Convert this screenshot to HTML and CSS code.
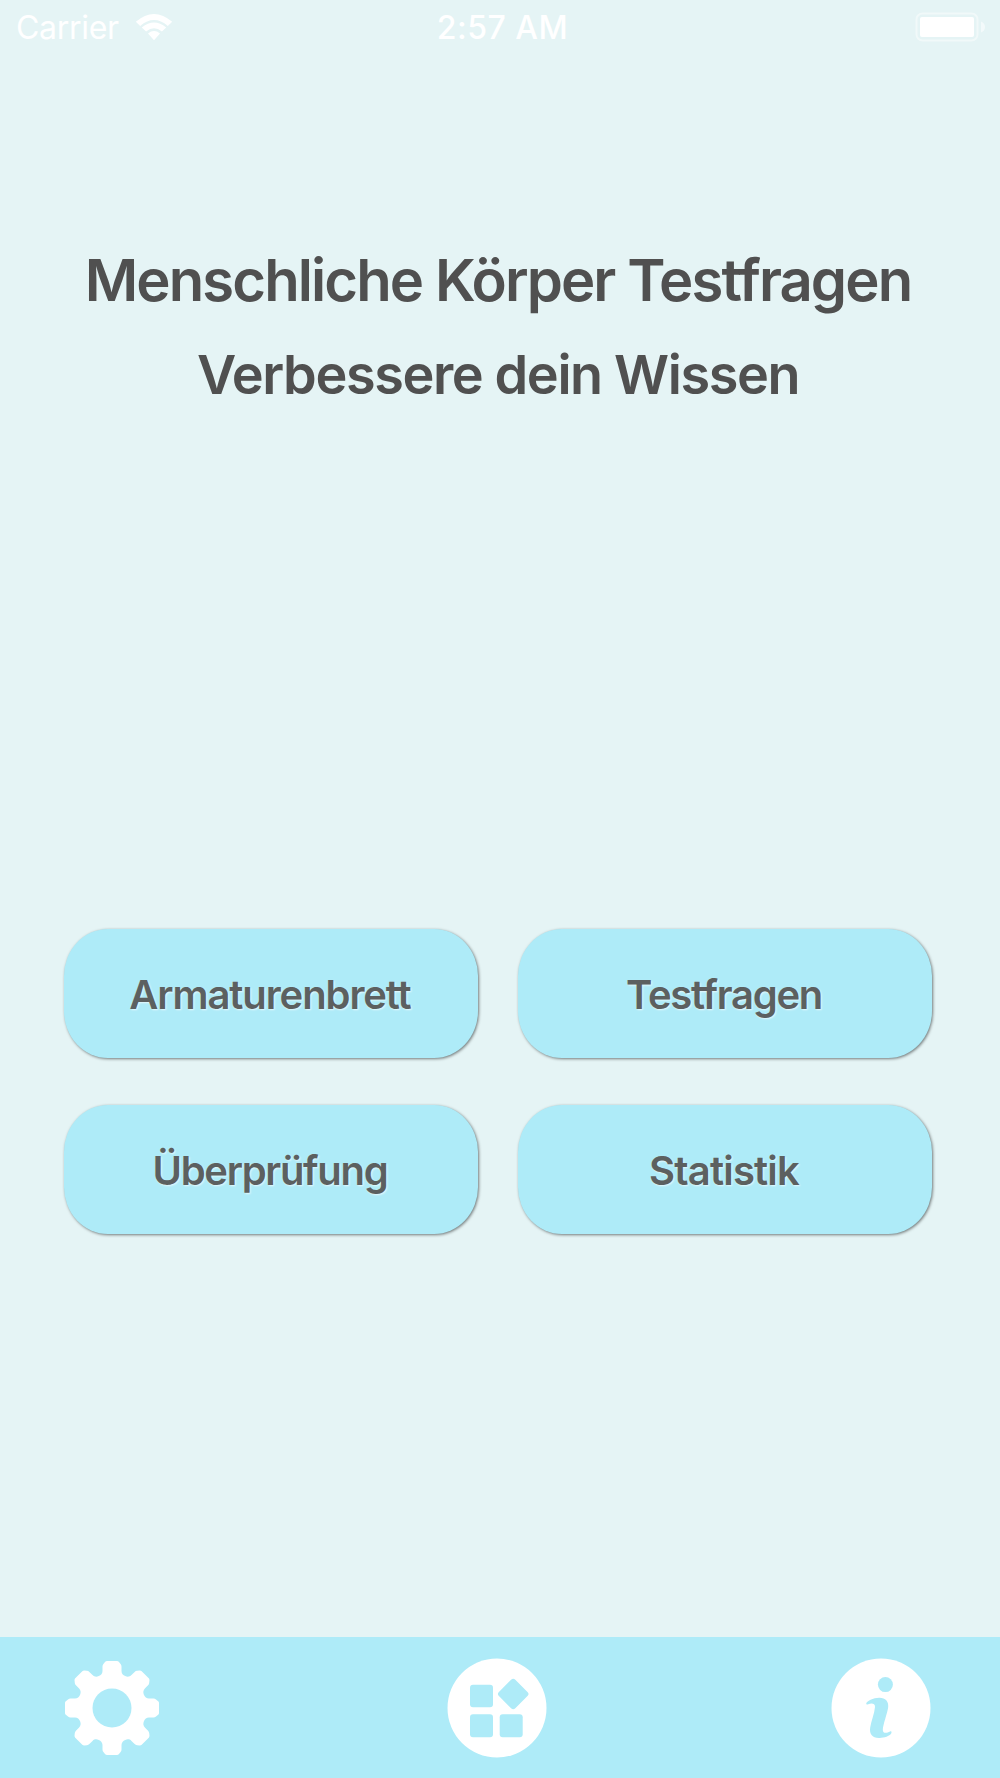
FILE: index.html
```html
<!DOCTYPE html>
<html lang="de">
<head>
  <meta charset="UTF-8">
  <meta name="viewport" content="width=device-width, initial-scale=1.0">
  <title>Menschliche Körper Testfragen</title>
  <link rel="stylesheet" href="styles.css">
</head>
<body>
  <!-- Status Bar -->
  <header class="status-bar">
    <div class="network">
      <span class="carrier">Carrier</span>
      <svg class="wifi" viewBox="0 0 38 27">
        <path d="M0.8 7.8 Q19 -7.8 37.2 7.8 L32.8 12 Q19 0.2 5.2 12 Z"/>
        <path d="M6.8 13.4 Q19 3.4 31.2 13.4 L26.9 17.5 Q19 11 11.1 17.5 Z"/>
        <path d="M13 19.4 Q19 14.8 25 19.4 L19 26.2 Z"/>
      </svg>
    </div>
    <span class="clock">2:57 AM</span>
    <svg class="battery" viewBox="0 0 70 30">
      <rect x="1.5" y="1.5" width="61" height="27" rx="6" class="battery-frame"/>
      <rect x="5" y="5" width="54" height="20" rx="2"/>
      <path d="M66 9.5 Q70 11 70 15 Q70 19 66 20.5 Z" class="battery-tip"/>
    </svg>
  </header>

  <main class="home">
    <h1 class="title">Menschliche Körper Testfragen</h1>
    <h2 class="subtitle">Verbessere dein Wissen</h2>

    <div class="menu">
      <button class="menu-button"><span class="label-dashboard">Armaturenbrett</span></button>
      <button class="menu-button"><span class="label-quiz">Testfragen</span></button>
      <button class="menu-button"><span class="label-review">Überprüfung</span></button>
      <button class="menu-button"><span class="label-stats">Statistik</span></button>
    </div>
  </main>

  <!-- Bottom Bar -->
  <nav class="tab-bar">
    <a class="tab" aria-label="Einstellungen">
      <svg viewBox="-50 -50 100 100">
        <defs>
          <path id="tooth" d="M0 0 L-13.2 -31.9 C-11 -32.8 -9.5 -34.5 -9.5 -37 V-41.5 Q-9.5 -43 -8.6 -44 L-6.8 -46.2 Q-6 -47 -5 -47 H5 Q6 -47 6.8 -46.2 L8.6 -44 Q9.5 -43 9.5 -41.5 V-37 C9.5 -34.5 11 -32.8 13.2 -31.9 Z"/>
        </defs>
        <circle r="34.2"/>
        <use href="#tooth"/>
        <use href="#tooth" transform="rotate(45)"/>
        <use href="#tooth" transform="rotate(90)"/>
        <use href="#tooth" transform="rotate(135)"/>
        <use href="#tooth" transform="rotate(180)"/>
        <use href="#tooth" transform="rotate(225)"/>
        <use href="#tooth" transform="rotate(270)"/>
        <use href="#tooth" transform="rotate(315)"/>
        <circle r="19.5" class="cutout"/>
      </svg>
    </a>
    <a class="tab" aria-label="Kategorien">
      <svg viewBox="-50 -50 100 100">
        <circle r="49.5"/>
        <g class="cutout">
          <rect x="-27" y="-23.3" width="23" height="22.6" rx="3"/>
          <rect x="-27" y="6.2" width="23" height="23" rx="3"/>
          <rect x="2.7" y="6.2" width="23" height="23" rx="3"/>
          <rect x="-11.6" y="-11.6" width="23.2" height="23.2" rx="3" transform="translate(16.2 -14) rotate(45)"/>
        </g>
      </svg>
    </a>
    <a class="tab" aria-label="Info">
      <svg viewBox="-50 -50 100 100">
        <circle r="49.5"/>
        <g class="cutout">
          <circle cx="4.4" cy="-23.4" r="7.5"/>
          <path d="M-14.8 -4.2 C-14.8 -6.8 -7 -10.5 -1.5 -10.3 C4.5 -10.2 7.8 -6.5 7.2 -1 C6.5 5 1.8 17 1.8 22 C2 26 6 25 9 23.5 C10.5 22.8 11 23.8 10.2 25.6 C8.5 28.5 2.5 30.2 -2 30 C-9 29.7 -11.8 26 -10.8 19.5 C-9.8 13 -6.5 5.5 -6 -1 C-5.8 -5 -10 -4.8 -12.8 -3.7 C-14 -3.2 -14.8 -3.3 -14.8 -4.2 Z"/>
        </g>
      </svg>
    </a>
  </nav>
</body>
</html>
```

FILE: styles.css
```css
/* General Styling */
* {
  box-sizing: border-box;
}

body {
  margin: 0;
  height: 100vh;
  display: flex;
  flex-direction: column;
  font-family: Inter, 'Liberation Sans', sans-serif;
  font-variant-ligatures: none;
  color: #505050;
  background: #e5f4f5;
  overflow: hidden;
}

svg {
  display: block;
  fill: #fff;
}

/* Status Bar */
.status-bar {
  height: 54px;
  padding: 0 15px 0 16px;
  display: grid;
  grid-template-columns: 1fr auto 1fr;
  align-items: center;
  color: #fff;
  font-size: 32px;
}

.network {
  display: flex;
  align-items: center;
  gap: 16px;
}

.carrier {
  letter-spacing: -0.3px;
}

.clock {
  padding-left: 4px;
  font-weight: 500;
  letter-spacing: 0.5px;
}

.wifi {
  width: 38px;
  height: 27px;
}

.battery {
  width: 70px;
  height: 30px;
  justify-self: end;
}

.battery-frame {
  fill: none;
  stroke: #fff;
  stroke-width: 2;
  opacity: 0.45;
}

.battery-tip {
  opacity: 0.55;
}

/* Home Screen */
.home {
  flex: 1;
  padding-right: 4px;
  text-align: center;
}

.title,
.subtitle {
  margin: 0;
  font-weight: 600;
  white-space: nowrap;
}

.title {
  padding-top: 191px;
  font-size: 58px;
  line-height: 70px;
  letter-spacing: -1.9px;
}

.subtitle {
  padding-top: 25px;
  font-size: 54px;
  line-height: 70px;
  letter-spacing: -1.4px;
}

.menu {
  display: grid;
  grid-template-columns: 414px 414px;
  grid-auto-rows: 129px;
  gap: 47px 40px;
  justify-content: center;
  margin-top: 519px;
}

.menu-button {
  padding: 2px 2px 0 0;
  border: none;
  border-radius: 44px / 47px;
  background: #aeebf8;
  box-shadow: 1px 1px 3px rgba(0, 0, 0, 0.5);
  color: #5c6060;
  font-family: inherit;
  font-size: 40px;
  font-weight: 600;
  text-shadow: 1px 1px 2px rgba(255, 255, 255, 0.7);
}

.label-dashboard {
  letter-spacing: -1.1px;
}

.label-quiz,
.label-review {
  letter-spacing: -1.3px;
}

.label-stats {
  letter-spacing: -0.8px;
}

/* Bottom Bar */
.tab-bar {
  height: 141px;
  padding: 0 69px 0 62px;
  display: flex;
  justify-content: space-between;
  align-items: center;
  background: #aeebf8;
}

.tab svg {
  width: 100px;
  height: 100px;
}

.cutout {
  fill: #aeebf8;
}
```
